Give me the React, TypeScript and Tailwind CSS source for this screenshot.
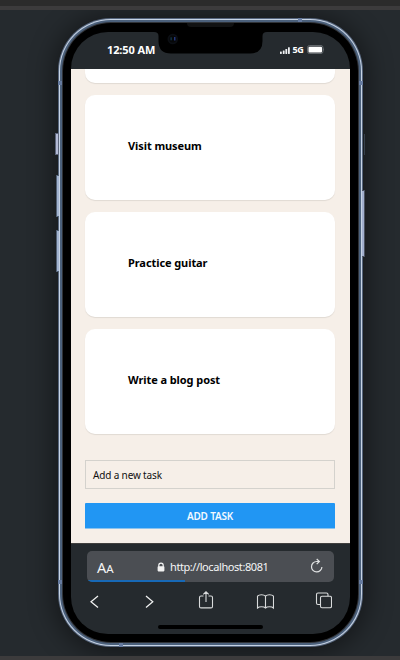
import React from "react";

function StatusBar() {
  return (
    <div className="relative h-[37px] shrink-0 flex justify-between pl-[36px] pr-[25px]">
      <span className="mt-[11px] text-[11px] leading-[14px] font-bold text-white tracking-[-0.12px] whitespace-nowrap">12:50 AM</span>
      <div className="mt-[11px] h-[14px] flex items-center">
        <svg width="11" height="9" viewBox="0 0 11 9" fill="#eef0f2">
          <rect x="0" y="5.6" width="1.8" height="2.4" rx=".4" />
          <rect x="2.8" y="4.4" width="1.8" height="3.6" rx=".4" />
          <rect x="5.4" y="3" width="1.8" height="5" rx=".4" />
          <rect x="8" y="1.2" width="1.8" height="6.8" rx=".4" />
        </svg>
        <span className="ml-[2px] w-[13px] text-[9px] leading-[14px] font-bold text-white tracking-[-0.3px]">5G</span>
        <svg className="ml-px" width="18" height="10" viewBox="0 0 18 10">
          <rect x=".5" y=".5" width="15.500" height="8" rx="2" fill="#30353a" stroke="#62676b" />
          <rect x="1.500" y="1.700" width="13.500" height="5.700" rx="1" fill="#fff" />
          <path d="M16.5 3Q17.8 4.500 16.5 6Z" fill="#85898c" />
        </svg>
      </div>
      <svg className="absolute left-[83px] top-[-1px]" width="113" height="24" viewBox="0 0 113 24">
        <path d="M0 0V1Q4.5 1 4.5 5V10Q4.5 22.5 17 22.5H96Q108.500 22.5 108.500 10V5Q108.500 1 113 1V0Z" fill="#000" />
        <circle cx="18.800" cy="8" r="5.300" fill="#0b0e13" />
        <circle cx="18.800" cy="8" r="3.500" fill="#060708" />
        <rect x="16.600" y="6.300" width="1" height="3" fill="#15455e" />
        <rect x="20" y="6" width="1.500" height="3.500" fill="#25377c" />
      </svg>
    </div>
  );
}

function Task({ title }: { title: string }) {
  return (
    <div className="h-[105px] mb-[12.200px] shrink-0 rounded-[10px] bg-white shadow-[0_1px_1px_rgba(0,0,0,0.09)] pl-[43px] flex items-center">
      <span className="mb-[3px] text-[11px] leading-[16px] font-bold text-black whitespace-nowrap tracking-[-0.08px]">{title}</span>
    </div>
  );
}

function TaskPage() {
  return (
    <div className="h-[474px] shrink-0 bg-[#f6efe8] pl-[14px] pr-[14.500px] flex flex-col overflow-hidden">
      <div className="h-[14.300px] mb-[11.700px] shrink-0 rounded-b-[10px] bg-white shadow-[0_1px_1px_rgba(0,0,0,0.09)]" />
      <Task title="Visit museum" />
      <Task title="Practice guitar" />
      <Task title="Write a blog post" />
      <div className="mt-[13.400px] h-[29px] shrink-0 border border-[#d4d2cd] pl-[7px] pt-[2px] flex items-center text-[10px] text-[#111] tracking-[-0.15px]">Add a new task</div>
      <div className="mt-[14px] h-[26px] shrink-0 rounded-[1px] bg-[#2196f3] border-b border-[#8bc3ee] pt-[2px] flex items-center justify-center text-[10px] font-semibold text-[#f2f9ff] tracking-[-0.2px]">ADD TASK</div>
    </div>
  );
}

function BrowserBar() {
  return (
    <div className="grow flex flex-col border-t border-[#41403f]">
      <div className="relative ml-[16px] mt-[7px] w-[247px] h-[31px] rounded-[5px] overflow-hidden bg-[#4b4e53] flex items-center text-[#f4f5f6]">
        <div className="ml-[10px] mt-[2px] w-[60px] flex items-baseline">
          <span className="text-[14.500px] leading-[18px]">A</span>
          <span className="text-[11.500px] leading-[18px]">A</span>
        </div>
        <svg width="8" height="10" viewBox="0 0 8 10">
          <path d="M1.800 5V3.300a2.200 2.200 0 0 1 4.400 0V5" fill="none" stroke="#f2f2f2" strokeWidth="1.200" />
          <rect x=".6" y="4.200" width="6.800" height="5.200" rx=".8" fill="#f2f2f2" />
        </svg>
        <span className="ml-[5px] text-[11px] leading-[14px] tracking-[-0.42px] whitespace-nowrap">http://localhost:8081</span>
        <svg className="absolute left-[223px] top-[7px]" width="15" height="16" viewBox="0 0 15 16" fill="none" stroke="#dfe1e2" strokeWidth="1.200">
          <path d="M11.900 8.900a5.200 5.200 0 1 1-5.200-5.400H9" />
          <path d="M6.700 1 9.400 3.500 6.700 6.200" />
        </svg>
        <div className="absolute left-0 bottom-0 h-[2px] w-[98px] bg-[#1769b7]" />
      </div>
      <div className="mt-[9px] ml-[18px] w-[245px] h-[22px] flex items-center">
        <svg width="10" height="22" viewBox="0 0 10 22" fill="none" stroke="#f0f1f1" strokeWidth="1.250"><path d="m9 5-7 5.800 7 5.800" /></svg>
        <svg className="ml-[45px]" width="10" height="22" viewBox="0 0 10 22" fill="none" stroke="#f0f1f1" strokeWidth="1.250"><path d="m2 5 6.800 5.800-6.800 5.800" /></svg>
        <svg className="ml-[44px]" width="16" height="22" viewBox="0 0 16 22" fill="none" stroke="#d9dbdc" strokeWidth="1.100">
          <path d="M5.500 5H3q-1.500 0-1.500 1.500v8.900q0 1.500 1.500 1.500h10q1.500 0 1.500-1.500V6.500q0-1.500-1.500-1.500h-2.500M8 11V1M5.300 3.400 8 .8l2.700 2.600" />
        </svg>
        <svg className="ml-[42px]" width="18" height="22" viewBox="0 0 18 22" fill="none" stroke="#d9dbdc" strokeWidth="1.100">
          <path d="M9.500 17V5.200Q8.200 3.700 5.500 3.700T1.500 5.200V17q1.300-1.200 4-1.200T9.500 17q1.300-1.200 4-1.200t4 1.200V5.200q-1.300-1.500-4-1.500T9.500 5.200" />
        </svg>
        <svg className="ml-[41px]" width="17" height="22" viewBox="0 0 17 22" fill="none" stroke="#d9dbdc" strokeWidth="1.100">
          <rect x="5.500" y="5.300" width="11" height="11.500" rx="1.500" />
          <path d="M5.500 13.500H3Q1.500 13.500 1.500 12V3.500Q1.500 2 3 2h8.500Q13 2 13 3.500v1.800" />
        </svg>
      </div>
      <div className="mt-[12px] ml-[87px] w-[105px] h-[4px] rounded-full bg-black" />
    </div>
  );
}

export default function App() {
  return (
    <div className="w-[400px] h-[660px] overflow-hidden bg-[#252a2e] flex flex-col font-['Noto_Sans','Open_Sans',sans-serif]">
      <div className="h-[10px] shrink-0 bg-[#2b2b2b] border-b-4 border-[#3c3b3c]" />
      <div className="h-[646px] shrink-0 overflow-hidden pt-[8px] pl-[58px]">
        <div className="relative w-[305px] h-[628.500px] rounded-[53px] bg-[#56657c] p-px shadow-[0_2px_26px_4px_rgba(0,0,0,0.45)]">
          <div className="absolute left-[-3px] top-[115px] w-[4px] h-[22px] bg-[#b4bbd5] border border-[#5d667c]" />
          <div className="absolute left-[-2px] top-[157px] w-[3px] h-[42px] bg-[#a3b4d0] border-l border-y border-[#526175]" />
          <div className="absolute left-[-2px] top-[212px] w-[3px] h-[42px] bg-[#a3b4d0] border-l border-y border-[#526175]" />
          <div className="absolute left-[306px] top-[116px] w-px h-[21px] bg-[#37414c]" />
          <div className="absolute left-[304px] top-[172px] w-[3px] h-[67px] bg-[#a3b0ce] border-r border-y border-[#4b5361]" />
          <div className="h-full rounded-[52px] bg-[#c6d3e4] p-px">
            <div className="relative h-full rounded-[51px] bg-[#4c617c] p-[2px]">
              <div className="h-full rounded-[49px] bg-[#303338] p-px">
                <div className="h-full rounded-[48px] bg-black pt-[9px] pl-[8px]">
                  <div className="w-[278.500px] h-[602px] rounded-[37px] overflow-hidden bg-[#252a2e] flex flex-col">
                    <StatusBar />
                    <TaskPage />
                    <BrowserBar />
                  </div>
                </div>
              </div>
            </div>
          </div>
          <div className="absolute left-[129px] top-[5px] w-[47px] h-[4px] rounded-b bg-[#111213]" />
          <div className="absolute left-[240px] top-0 w-[4px] h-[4px] bg-[#667ba0]" />
          <div className="absolute left-[61px] bottom-0 w-[4px] h-[4px] bg-[#667ba0]" />
          <div className="absolute left-0 top-[63px] w-[4px] h-[4px] bg-[#667ba0]" />
          <div className="absolute right-0 top-[63px] w-[4px] h-[4px] bg-[#667ba0]" />
          <div className="absolute left-0 bottom-[63px] w-[4px] h-[4px] bg-[#667ba0]" />
          <div className="absolute right-0 bottom-[63px] w-[4px] h-[4px] bg-[#667ba0]" />
        </div>
      </div>
      <div className="h-[4px] shrink-0 bg-[#3c3b3c]" />
    </div>
  );
}
